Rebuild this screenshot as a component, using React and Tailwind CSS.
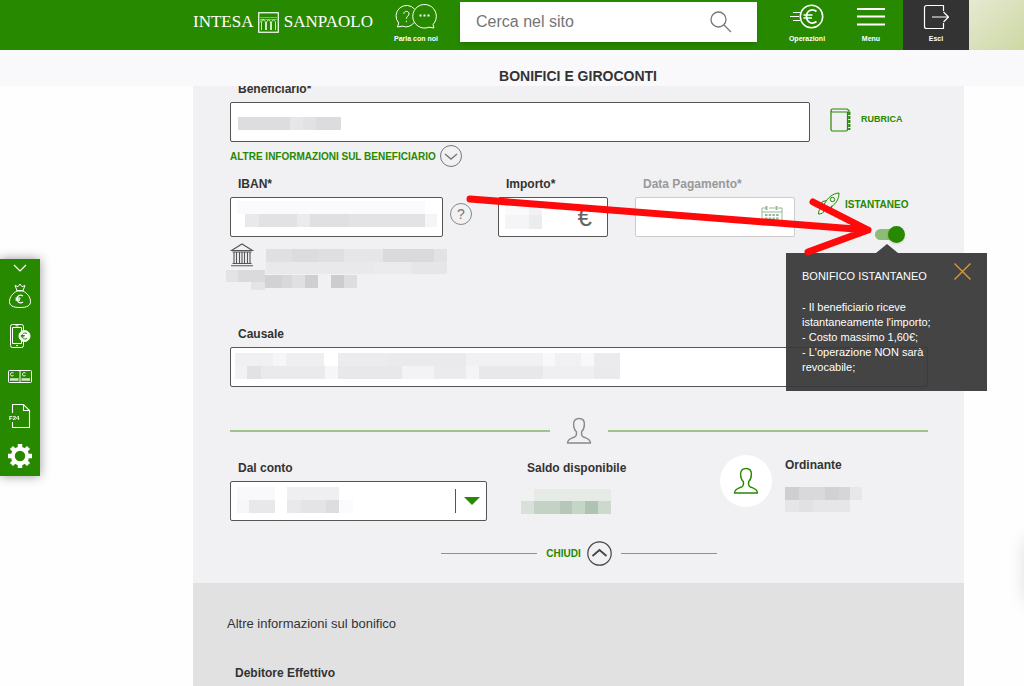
const label = "block pl-2 text-[12px] leading-4 font-bold text-[#333]";
const field =
  "block h-10 w-full rounded-xs border border-[#555] bg-white px-3 text-sm text-[#333] outline-none";

// hidden values: [x, y, width, height, color]
const beneficiarioCells = [
  [0, 0, 52, 13, "#dddcde"],
  [52, 0, 13, 13, "#e7e6e8"],
  [65, 0, 13, 13, "#e2e1e3"],
  [78, 0, 25, 13, "#dcdbdd"],
];

const ibanCells = [
  [0, 0, 188, 13, "#faf9fb"],
  [8, 13, 14, 13, "#e9e8ea"],
  [22, 13, 38, 13, "#e2e1e3"],
  [60, 13, 13, 13, "#ebeaec"],
  [73, 13, 39, 13, "#e0dfe1"],
  [112, 13, 76, 13, "#e3e2e4"],
  [188, 13, 12, 13, "#f5f4f6"],
];

const bankCells = [
  [40, 6, 26, 13, "#e0dfe1"],
  [66, 6, 27, 13, "#dcdbdd"],
  [93, 6, 25, 13, "#dfdee0"],
  [118, 6, 39, 13, "#e6e5e7"],
  [157, 6, 51, 13, "#dad9db"],
  [208, 6, 13, 13, "#e2e1e3"],
  [40, 19, 107, 12, "#e9e8ea"],
  [147, 19, 38, 12, "#ebeaec"],
  [185, 19, 36, 12, "#e6e5e7"],
  [0, 27, 12, 12, "#e3e2e4"],
  [12, 27, 27, 12, "#dad9db"],
  [25, 39, 14, 8, "#e4e3e5"],
  [39, 32, 17, 13, "#d2d1d3"],
  [56, 32, 10, 13, "#d8d7d9"],
  [66, 32, 13, 13, "#e0dfe1"],
  [79, 32, 13, 13, "#cfced0"],
  [105, 32, 13, 13, "#cccbcd"],
  [118, 32, 13, 13, "#dddcde"],
];

const causaleCells = [
  [0, 0, 38, 13, "#f0eff1"],
  [38, 0, 13, 13, "#f6f5f7"],
  [51, 0, 38, 13, "#efeef0"],
  [103, 0, 51, 13, "#ecebed"],
  [154, 0, 77, 13, "#eae9eb"],
  [231, 0, 77, 13, "#f1f0f2"],
  [308, 0, 12, 13, "#f8f7f9"],
  [320, 0, 26, 13, "#f1f0f2"],
  [346, 0, 13, 13, "#f8f7f9"],
  [359, 0, 26, 13, "#ebeaec"],
  [0, 13, 12, 13, "#f2f1f3"],
  [12, 13, 14, 13, "#e2e1e3"],
  [26, 13, 64, 13, "#eae9eb"],
  [90, 13, 13, 13, "#f6f5f7"],
  [103, 13, 64, 13, "#e8e7e9"],
  [167, 13, 32, 13, "#f3f2f4"],
  [199, 13, 32, 13, "#ebeaec"],
  [231, 13, 13, 13, "#f4f3f5"],
  [244, 13, 64, 13, "#e8e7e9"],
  [308, 13, 51, 13, "#efeef0"],
  [359, 13, 26, 13, "#eae9eb"],
];

const contoCells = [
  [0, 0, 38, 13, "#f9f8fa"],
  [50, 0, 52, 13, "#efeef0"],
  [0, 13, 12, 13, "#f7f6f8"],
  [12, 13, 26, 13, "#e8e7e9"],
  [50, 13, 14, 13, "#e9e8ea"],
  [64, 13, 25, 13, "#e4e3e5"],
  [89, 13, 13, 13, "#dddcde"],
  [102, 13, 14, 13, "#fbfafc"],
];

const saldoCells = [
  [13, 0, 77, 12, "#e6ebe6"],
  [0, 12, 13, 13, "#d9e0d9"],
  [13, 12, 26, 13, "#c3d2c5"],
  [39, 12, 12, 13, "#b6c6b9"],
  [51, 12, 13, 13, "#c5d5c6"],
  [64, 12, 13, 13, "#aec3b1"],
  [77, 12, 13, 13, "#cdd9ce"],
];

const ordinanteCells = [
  [0, 0, 14, 13, "#cfced0"],
  [14, 0, 26, 13, "#d9d8da"],
  [40, 0, 14, 13, "#d1d0d2"],
  [54, 0, 11, 13, "#d6d5d7"],
  [65, 0, 12, 13, "#e7e6e8"],
  [0, 13, 65, 12, "#e6e5e7"],
  [14, 13, 14, 12, "#e1e0e2"],
];

const importoCells = [
  [0, 0, 24, 14, "#fafafa"],
  [24, 0, 13, 14, "#f2f1f3"],
  [0, 14, 24, 14, "#f5f4f6"],
  [24, 14, 13, 14, "#ecebed"],
];

const Masked = ({ cells, w, h, className = "" }) => (
  <svg
    width={w}
    height={h}
    aria-hidden="true"
    shapeRendering="crispEdges"
    className={`pointer-events-none shrink-0 ${className}`}
  >
    {cells.map(([x, y, cw, ch, fill]) => (
      <rect key={`${x}-${y}`} x={x} y={y} width={cw} height={ch} fill={fill} />
    ))}
  </svg>
);

const Person = ({ className }) => (
  <svg width="26" height="28" viewBox="0 0 26 28" fill="none" stroke="currentColor" strokeWidth="1.4" strokeLinejoin="round" className={className} aria-hidden="true">
    <path d="M13 1.5c-3.600 0-5.400 2.200-5.400 5.600 0 3.400 1 6 2.800 7.700.4 2.600-.1 4.200-1.600 5C6 21.200 1.700 21.600 1.500 26h23c-.2-4.400-4.500-4.800-7.300-6.200-1.500-.8-2-2.400-1.600-5 1.800-1.700 2.800-4.300 2.800-7.700 0-3.400-1.800-5.600-5.400-5.600z" />
  </svg>
);

const Logo = () => (
  <a href="#home" aria-label="Intesa Sanpaolo" className="flex w-[180px] shrink-0 items-center justify-between font-['Liberation_Serif',serif] text-[17px] leading-5 text-white">
    <span>INTESA</span>
    <svg width="21" height="21" viewBox="0 0 21 21" fill="none" stroke="currentColor" aria-hidden="true">
      <rect x="0.750" y="0.750" width="19.500" height="19.500" strokeWidth="1.200" />
      <path d="M2 5.500h17M2 7.500h17" strokeWidth="0.700" opacity="0.600" />
      <path d="M3.500 18v-7c0-4 4-4 4 0v7M8.500 18v-7c0-4 4-4 4 0v7M13.500 18v-7c0-4 4-4 4 0v7" strokeWidth="0.800" />
      <path d="M2 10.500c1-3 2-3 4-3" strokeWidth="0.600" />
    </svg>
    <span>SANPAOLO</span>
  </a>
);

const headerItem =
  "flex shrink-0 flex-col items-center gap-1 pt-1 text-[7px] leading-[10px] font-bold text-white whitespace-nowrap";

const Header = () => (
  <header className="flex h-[50px] items-stretch bg-[#278900] pl-[193px]">
    <div className="flex items-center pb-[6px]">
      <Logo />
    </div>
    <button className={`ml-3 w-[62px] ${headerItem}`}>
      <svg width="42" height="26" viewBox="0 0 42 26" fill="none" stroke="currentColor" strokeWidth="1" strokeLinejoin="round" aria-hidden="true">
        <path d="M19 18.500a9.500 9.500 0 0 1-11.500 3.700L2.500 23l1.200-4A9.700 9.700 0 1 1 19.500 5" />
        <path d="M38 20.500A11.800 11.800 0 1 0 34 23.200l5 .8z" />
        <path d="M8.800 9.800c0-3.400 5.200-3.200 5.200 0 0 2.200-2.600 2.400-2.600 5M11.400 16.800v1.400" />
        <path d="M24.500 11.500h2M28.500 11.500h2M32.500 11.500h2" strokeWidth="2" />
      </svg>
      Parla con noi
    </button>
    <form role="search" className="mt-[2px] ml-[13px] flex h-10 min-w-0 flex-1 items-center bg-white pr-6 pl-4 shadow-md">
      <input
        type="search"
        aria-label="Cerca nel sito"
        placeholder="Cerca nel sito"
        className="min-w-0 flex-1 bg-transparent text-base text-[#555] outline-none placeholder:text-[#757575]"
      />
      <button type="button" aria-label="Cerca" className="text-[#777]">
        <svg width="24" height="24" viewBox="0 0 24 24" fill="none" stroke="currentColor" strokeWidth="1.300" aria-hidden="true">
          <circle cx="9.500" cy="9.500" r="7.500" />
          <path d="M15 15l7 7" />
        </svg>
      </button>
    </form>
    <button className={`ml-[18px] w-[64px] ${headerItem}`}>
      <svg width="36" height="26" viewBox="0 0 36 26" fill="none" stroke="currentColor" strokeWidth="1.200" aria-hidden="true">
        <circle cx="22.500" cy="12.500" r="11.200" strokeWidth="1.500" />
        <path d="M27.500 7.500c-4.500-3.500-10-.7-10 5s5.500 8.500 10 5M14.500 11h9M14.500 14h8.500" strokeWidth="1.700" />
        <path d="M4 8.500h7M1 12.500h9M4 16.500h7" />
      </svg>
      Operazioni
    </button>
    <button className={`w-[64px] ${headerItem}`}>
      <svg width="28" height="26" viewBox="0 0 28 26" stroke="currentColor" strokeWidth="1.800" aria-hidden="true">
        <path d="M0 5h28M0 12.500h28M0 20.500h28" />
      </svg>
      Menu
    </button>
    <button className={`w-[66px] bg-[#333] ${headerItem}`}>
      <svg width="26" height="26" viewBox="0 0 26 26" fill="none" stroke="currentColor" strokeWidth="1.200" strokeLinejoin="round" aria-hidden="true">
        <path d="M20.500 7V1.500h-17a2 2 0 0 0-2 2v19a2 2 0 0 0 2 2h17V19" />
        <path d="M9 13h16M20.500 8l5 5-5 5" />
      </svg>
      Esci
    </button>
    <div className="w-[55px] shrink-0 bg-linear-to-br from-[#e6e9d2] to-[#cdd8a3]" />
  </header>
);

const SideBar = () => (
  <nav aria-label="Scorciatoie" className="fixed top-[259px] left-0 flex w-10 flex-col items-center bg-[#278900] text-white shadow-[0_0_10px_rgba(0,0,0,0.4)]">
    <button aria-label="Comprimi" className="flex h-[17px] w-full items-center justify-center">
      <svg width="14" height="8" viewBox="0 0 14 8" fill="none" stroke="currentColor" strokeWidth="1.200" aria-hidden="true">
        <path d="M1 1l6 6 6-6" />
      </svg>
    </button>
    <button aria-label="Risparmio" className="flex h-10 w-full items-center justify-center">
      <svg width="24" height="26" viewBox="0 0 24 26" fill="none" stroke="currentColor" strokeWidth="1" strokeLinejoin="round" aria-hidden="true">
        <path d="M9 8C5 10 1.500 14 1.500 18.500c0 4 3 6 10.500 6s10.500-2 10.500-6C22.500 14 19 10 15 8z" />
        <path d="M9 7.500L7 2.500l3 1.200L12 1l2 2.700 3-1.200-2 5M8.500 7.500h7" />
        <path d="M15 13c-3-2-6-.3-6 3s3 5 6 3M7.500 15.200h5M7.500 17h4.500" strokeWidth="1.300" />
      </svg>
    </button>
    <button aria-label="Pagamenti mobile" className="flex h-10 w-full items-center justify-center">
      <svg width="22" height="26" viewBox="0 0 22 26" fill="none" stroke="currentColor" strokeWidth="1" aria-hidden="true">
        <rect x="1.500" y="1.500" width="13" height="23" rx="2" />
        <path d="M3.500 4.500h9v16h-9zM6.500 2.900h3M7 22.600h2" />
        <circle cx="15.500" cy="13" r="5.500" fill="white" />
        <path d="M18 10.600c-2.500-1.500-5 0-5 2.400s2.500 4 5 2.400M11.800 12.500h4M11.800 13.800h3.500" stroke="#278900" />
      </svg>
    </button>
    <button aria-label="Carte" className="flex h-10 w-full items-center justify-center">
      <svg width="24" height="13" viewBox="0 0 24 13" fill="none" stroke="currentColor" strokeWidth="1" aria-hidden="true">
        <rect x="0.500" y="0.500" width="23" height="12" rx="1" />
        <path d="M12 0.500v12" />
        <path d="M5.500 3c-2-1-3 0-3 1.300s1 2.300 3 1.200M17.500 3c-2-1-3 0-3 1.300s1 2.300 3 1.200" />
        <path d="M2 9.500h8.500M13.500 9.500h8.500" strokeWidth="2.500" opacity="0.800" />
      </svg>
    </button>
    <button aria-label="Modello F24" className="flex h-10 w-full items-center justify-center">
      <svg width="24" height="26" viewBox="0 0 24 26" fill="none" stroke="currentColor" strokeWidth="1.100" aria-hidden="true">
        <path d="M4.500 10V1.500h11l6 6v17h-17V19M15.500 1.500v6h6" />
        <text x="1" y="17" fill="currentColor" stroke="none" fontSize="6" fontWeight="bold">F24</text>
      </svg>
    </button>
    <button aria-label="Impostazioni" className="flex h-10 w-full items-center justify-center">
      <svg width="26" height="26" viewBox="0 0 26 26" fill="none" stroke="currentColor" aria-hidden="true">
        <circle cx="13" cy="13" r="7.200" strokeWidth="4" />
        <path d="M13 1v4M13 21v4M1 13h4M21 13h4M4.500 4.500l2.800 2.800M18.700 18.700l2.800 2.800M4.500 21.500l2.800-2.800M18.700 7.300l2.800-2.800" strokeWidth="4.500" />
      </svg>
    </button>
  </nav>
);

const Tooltip = () => (
  <div role="tooltip" className="absolute top-[37px] -left-[89px] z-10 w-[201px] bg-[#3a3a3a]/95 p-4 text-[11px] leading-[15px] text-white">
    <span className="absolute -top-[9px] left-[90px] border-x-[11px] border-b-[9px] border-x-transparent border-b-[#444]" />
    <button type="button" aria-label="Chiudi avviso" className="absolute top-[10px] right-4 text-[#d9992f]">
      <svg width="17" height="17" viewBox="0 0 17 17" stroke="currentColor" strokeWidth="1.400" aria-hidden="true">
        <path d="M0.500 0.500l16 16M16.500 0.500l-16 16" />
      </svg>
    </button>
    <p className="mb-4">BONIFICO ISTANTANEO</p>
    <p>- Il beneficiario riceve istantaneamente l'importo;</p>
    <p>- Costo massimo 1,60€;</p>
    <p>- L'operazione NON sarà revocabile;</p>
  </div>
);

const Arrow = () => (
  <svg width="412" height="70" viewBox="0 0 412 70" fill="none" stroke="#ff0a0a" strokeWidth="7" strokeLinecap="round" strokeLinejoin="round" className="pointer-events-none absolute top-[14px] right-[52px] z-20" aria-hidden="true">
    <path d="M6 9l398 31M349 12l55 28-60 22" />
  </svg>
);

const BonificoForm = () => (
  <form className="bg-[#f1f0f2] pr-9 pb-[17px] pl-[37px]">
    <div className="-mt-[5px] flex items-end">
      <div className="min-w-0 flex-1">
        <label htmlFor="beneficiario" className={label}>Beneficiario*</label>
        <div className="relative mt-[5px]">
          <input id="beneficiario" className={field} />
          <Masked cells={beneficiarioCells} w={103} h={13} className="absolute top-[15px] left-2" />
        </div>
      </div>
      <a href="#rubrica" className="flex h-10 w-[118px] items-center gap-[10px] pb-1 pl-5 text-[9px] font-bold text-[#278900]">
        <svg width="21" height="24" viewBox="0 0 21 24" fill="none" stroke="currentColor" strokeWidth="1.200" aria-hidden="true">
          <path d="M1 3v18.500a1.500 1.500 0 0 0 1.500 1.500H16a1.500 1.500 0 0 0 1.500-1.500V4H2.500C.5 4 .5 1 2.500 1H17l2 1.500v2" />
          <path d="M19.300 4v18" strokeWidth="2.200" strokeDasharray="3 1" />
        </svg>
        RUBRICA
      </a>
    </div>

    <button type="button" className="mt-[3px] flex items-center gap-1 text-[10px] font-bold text-[#278900]">
      ALTRE INFORMAZIONI SUL BENEFICIARIO
      <svg width="22" height="22" viewBox="0 0 22 22" fill="none" stroke="#777" aria-hidden="true">
        <circle cx="11" cy="11" r="10.500" />
        <path d="M5 9l6 5 6-5" strokeWidth="1.400" />
      </svg>
    </button>

    <div className="relative mt-[9px] flex items-start">
      <div className="min-w-0 flex-1">
        <label htmlFor="iban" className={label}>IBAN*</label>
        <div className="relative mt-[5px]">
          <input id="iban" className={field} />
          <Masked cells={ibanCells} w={200} h={26} className="absolute top-1 left-[7px]" />
        </div>
      </div>
      <button type="button" aria-label="Aiuto IBAN" className="mt-[27px] ml-[7px] flex size-[22px] items-center justify-center rounded-full border border-[#888] text-sm leading-4 text-[#777]">
        ?
      </button>
      <div className="ml-[26px] w-[110px]">
        <label htmlFor="importo" className={label}>Importo*</label>
        <div className="relative mt-[5px]">
          <input id="importo" className={field} />
          <Masked cells={importoCells} w={37} h={28} className="absolute top-1 left-[7px]" />
          <span className="absolute top-2 right-4 text-[26px] leading-6 text-[#666]">€</span>
        </div>
      </div>
      <div className="ml-[27px] w-40">
        <label htmlFor="data" className="block pl-2 text-[12px] leading-4 font-bold text-[#999]">Data Pagamento*</label>
        <div className="relative mt-[5px]">
          <input id="data" disabled className="block h-10 w-full rounded-xs border border-[#ccc] bg-white px-3 text-sm" />
          <svg width="22" height="22" viewBox="0 0 22 22" fill="none" stroke="#93b996" className="absolute top-2 right-3" aria-hidden="true">
            <path d="M5 3H1v17h20V3h-4M8 3h6M1 7h20" />
            <path d="M5.500 1v4M15.500 1v4" strokeWidth="2" />
            <path d="M4 10h14M4 13.500h14M4 17h14" strokeDasharray="2.500 1.200" strokeWidth="2" />
          </svg>
        </div>
      </div>
      <div className="ml-[22px] w-[111px] pt-4">
        <label htmlFor="istantaneo" className="flex h-6 items-center gap-[5px] text-[10px] font-bold text-[#278900]">
          <svg width="23" height="24" viewBox="0 0 23 24" fill="none" stroke="currentColor" strokeWidth="1" strokeLinejoin="round" aria-hidden="true">
            <path d="M22 1c-6 .5-11 4-15 11.500l4.500 4C18.500 13 22 7.500 22 1z" />
            <circle cx="15.500" cy="7.500" r="2.200" />
            <path d="M10 8.500L5.500 9.500 3 14l4-1.500M15 13.500L14 18l-4 2.500 1.500-4M5 16.500c-2.500 0-3.500 2-3.500 5.500 3.500 0 5-1 5.500-3.500" />
          </svg>
          ISTANTANEO
        </label>
        <div className="relative ml-[58px] flex h-[27px] w-[30px] items-end">
          <input
            id="istantaneo"
            type="checkbox"
            role="switch"
            defaultChecked
            className="flex h-[17px] w-[30px] appearance-none items-center rounded-full before:h-[11px] before:w-6 before:rounded-full before:bg-[#8dbb78] after:-ml-[11px] after:size-[17px] after:rounded-full after:bg-[#278900] after:shadow"
          />
          <Tooltip />
        </div>
      </div>
      <Arrow />
    </div>

    <div className="-ml-1 grid h-12">
      <svg width="24" height="24" viewBox="0 0 24 24" fill="none" stroke="#555" strokeWidth="1.100" className="col-start-1 row-start-1 ml-1" aria-hidden="true">
        <path d="M1.500 7.500L12 1l10.500 6.500zM2.500 9h19M2.500 20.500h19M1 22.800h22" />
        <path d="M4 9v11.500M6.500 9v11.500M9.500 9v11.500M12 9v11.500M14.500 9v11.500M17.500 9v11.500M20 9v11.500" />
      </svg>
      <Masked cells={bankCells} w={222} h={48} className="col-start-1 row-start-1" />
    </div>

    <div className="mt-[35px]">
      <label htmlFor="causale" className={label}>Causale</label>
      <div className="relative mt-[5px]">
        <input id="causale" className={field} />
        <Masked cells={causaleCells} w={385} h={26} className="absolute top-[6px] left-[5px]" />
      </div>
    </div>

    <div className="mt-[30px] flex items-center gap-4 text-[#888]">
      <hr className="flex-1 border-t-2 border-[#9fc389]" />
      <Person />
      <hr className="flex-1 border-t-2 border-[#9fc389]" />
    </div>

    <div className="mt-[10px] flex items-start">
      <div className="min-w-0 flex-1 pt-[5px]">
        <label htmlFor="conto" className={label}>Dal conto</label>
        <div className="relative mt-[5px]">
          <select id="conto" className={`appearance-none ${field}`}>
            <option></option>
          </select>
          <Masked cells={contoCells} w={116} h={26} className="absolute top-[6px] left-[7px]" />
          <span className="pointer-events-none absolute top-2 right-[7px] flex h-6 items-center border-l border-[#555] pl-2">
            <span className="border-x-8 border-t-8 border-x-transparent border-t-[#278900]" />
          </span>
        </div>
      </div>
      <div className="ml-[34px] w-[199px] pt-[5px]">
        <p className="pl-[6px] text-[12px] leading-4 font-bold text-[#333]">Saldo disponibile</p>
        <Masked cells={saldoCells} w={90} h={25} className="mt-[13px]" />
      </div>
      <div className="flex size-[52px] items-center justify-center rounded-full bg-white text-[#278900]">
        <Person />
      </div>
      <div className="ml-[13px] w-[143px] pt-[2px]">
        <p className="text-[12px] leading-4 font-bold text-[#333]">Ordinante</p>
        <Masked cells={ordinanteCells} w={78} h={25} className="mt-[14px]" />
      </div>
    </div>

    <div className="mt-5 flex items-center justify-center gap-[9px]">
      <hr className="w-24 border-[#6fae52]" />
      <button type="button" className="flex items-center gap-[6px] text-[10px] font-bold text-[#278900]">
        CHIUDI
        <svg width="25" height="25" viewBox="0 0 25 25" fill="none" stroke="#444" aria-hidden="true">
          <circle cx="12.500" cy="12.500" r="11.700" strokeWidth="1.200" />
          <path d="M5.500 15l7-6 7 6" strokeWidth="1.800" />
        </svg>
      </button>
      <hr className="w-24 border-[#6fae52]" />
    </div>
  </form>
);

const App = () => {
  return (
    <div className="flex min-h-screen flex-col overflow-hidden bg-[#fefefe] font-['Liberation_Sans',Arial,sans-serif]">
      <Header />
      <h1 className="bg-[#f9f8fb] pt-4 pl-[132px] text-center text-[14px] leading-5 font-bold text-[#333]">
        BONIFICI E GIROCONTI
      </h1>
      <main className="flex flex-1 flex-col overflow-hidden pr-[60px] pl-[193px]">
        <BonificoForm />
        <section className="flex-1 bg-[#e2e1e2] px-[34px] pt-8 pb-[5px] text-[#333]">
          <h2 className="text-[13px] leading-[18px]">Altre informazioni sul bonifico</h2>
          <h3 className="mt-8 pl-2 text-[12px] leading-4 font-bold">Debitore Effettivo</h3>
        </section>
      </main>
      <SideBar />
      <div className="fixed top-[540px] -right-11 h-[60px] w-10 shadow-[0_0_20px_rgba(0,0,0,0.2)]" />
    </div>
  );
};

export default App;
